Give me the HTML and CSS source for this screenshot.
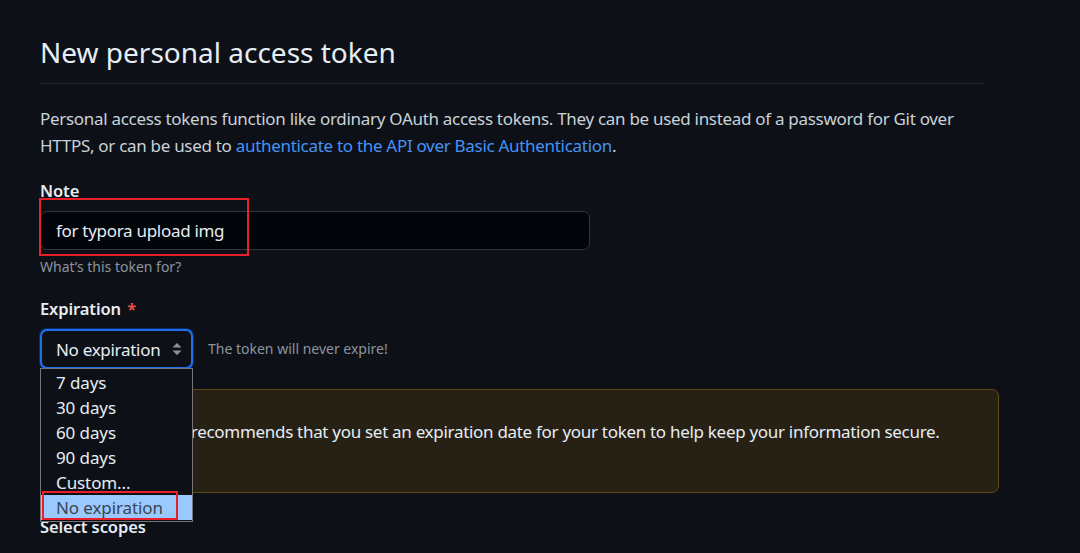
FILE: index.html
```html
<!DOCTYPE html>
<html lang="en">
<head>
<meta charset="utf-8">
<title>New personal access token</title>
<link rel="stylesheet" href="styles.css">
</head>
<body>
<main class="page">
  <div class="subhead">
    <h1 class="subhead-title">New personal access token</h1>
  </div>
  <p class="intro">Personal access tokens function like ordinary OAuth access tokens. They can be used instead of a password for Git over HTTPS, or can be used to <a href="#" class="link">authenticate to the API over Basic Authentication</a>.</p>

  <div class="form-group note-group">
    <label class="label">Note</label>
    <div class="input-wrap">
      <input class="text-input" type="text" value="for typora upload img">
      <span class="annot annot-note"></span>
    </div>
    <p class="note-hint">What’s this token for?</p>
  </div>

  <div class="form-group exp-group">
    <label class="label">Expiration <span class="req">*</span></label>
    <div class="exp-row">
      <div class="select-wrap">
        <div class="select">
          <span>No expiration</span>
          <svg class="select-arrow" width="10" height="14" viewBox="0 0 10 14"><path d="M5 1 L9.5 5.5 H0.5 Z M5 13 L9.5 8.5 H0.5 Z" fill="#8b949e"/></svg>
        </div>
        <ul class="dropdown">
          <li class="opt">7 days</li>
          <li class="opt">30 days</li>
          <li class="opt">60 days</li>
          <li class="opt">90 days</li>
          <li class="opt">Custom...</li>
          <li class="opt opt-selected">No expiration</li>
        </ul>
        <span class="annot annot-opt"></span>
      </div>
      <span class="exp-hint">The token will never expire!</span>
    </div>
  </div>

  <div class="flash-warn">
    <svg class="flash-icon" width="18" height="18" viewBox="0 0 16 16"><path fill="#d29922" d="M6.457 1.047c.659-1.234 2.427-1.234 3.086 0l6.082 11.378A1.75 1.75 0 0 1 14.082 15H1.918a1.750 1.75 0 0 1-1.543-2.575Zm1.763.707a.25.25 0 0 0-.44 0L1.698 13.132a.25.25 0 0 0 .22.368h12.164a.25.25 0 0 0 .22-.368Zm.53 3.996v2.5a.75.75 0 0 1-1.5 0v-2.5a.75.75 0 0 1 1.5 0ZM9 11a1 1 0 1 1-2 0 1 1 0 0 1 2 0Z"/></svg>
    <span>GitHub recommends that you set an expiration date for your token to help keep your information secure.</span>
  </div>

  <h3 class="scopes-title">Select scopes</h3>
</main>
</body>
</html>
```

FILE: styles.css
```css
* { box-sizing: border-box; }
html, body { margin: 0; padding: 0; }
body {
  background: #0d1117;
  color: #c9d1d9;
  font-family: "Noto Sans", "Open Sans", sans-serif;
  font-size: 17px;
  letter-spacing: -0.3px;
  line-height: 27px;
  overflow: hidden;
  height: 553px;
}
.page {
  padding: 0 0 0 40px;
  width: 1000px;
}
.subhead {
  width: 945px;
  border-bottom: 1px solid #21262d;
  padding-top: 34px;
  padding-bottom: 12px;
}
.subhead-title {
  margin: 0;
  font-weight: 400;
  font-size: 28px;
  letter-spacing: 0;
  line-height: 37px;
  color: #e6edf3;
}
.intro {
  margin: 21px 0 0 0;
  width: 945px;
  color: #c9d1d9;
}
.link { color: #4493f8; text-decoration: none; }
.label {
  display: block;
  font-weight: 600;
  color: #e6edf3;
  font-size: 16.5px;
  letter-spacing: -0.1px;
  line-height: 24px;
}
.note-group { margin-top: 20px; }
.input-wrap { position: relative; margin-top: 8px; width: 550px; }
.text-input {
  display: block;
  width: 550px;
  height: 39px;
  background: #010409;
  border: 1px solid #30363d;
  border-radius: 7px;
  color: #e6edf3;
  font-family: inherit;
  font-size: 17px;
  letter-spacing: -0.3px;
  padding: 0 15px;
  outline: none;
}
.note-hint {
  margin: 6px 0 0 0;
  font-size: 14px;
  letter-spacing: 0;
  line-height: 21px;
  color: #8b949e;
}
.exp-group { margin-top: 20px; }
.req { color: #f85149; margin-left: 2px; }
.exp-row {
  display: flex;
  align-items: center;
  gap: 15px;
  margin-top: 8px;
}
.select-wrap { position: relative; z-index: 5; }
.select {
  width: 153px;
  height: 40px;
  border: 2px solid #1f6feb;
  border-radius: 7px;
  box-shadow: 0 0 0 1px #0c2d6b;
  background: #0d1117;
  display: flex;
  align-items: center;
  justify-content: space-between;
  padding: 0 9px 0 14px;
  color: #e6edf3;
}
.select-arrow { display: block; }
.exp-hint {
  font-size: 14px;
  letter-spacing: 0;
  color: #8b949e;
  margin-top: -2px;
}
.dropdown {
  position: absolute;
  left: 0;
  top: 39px;
  width: 153px;
  margin: 0;
  padding: 1px 0;
  list-style: none;
  background: #0d1117;
  border: 1px solid #767676;
}
.opt {
  height: 25px;
  line-height: 25px;
  padding-left: 15px;
  color: #e6edf3;
  letter-spacing: -0.1px;
  white-space: nowrap;
}
.opt-selected {
  background: #99c9ff;
  color: #3c4450;
}
.annot {
  position: absolute;
  border: 2px solid #e8202a;
  pointer-events: none;
}
.annot-note { left: -1px; top: -13px; width: 210px; height: 58px; }
.annot-opt { left: 2px; top: 162px; width: 136px; height: 29px; z-index: 6; }
.flash-warn {
  margin-top: 20px;
  width: 959px;
  height: 104px;
  background: #272115;
  border: 1px solid #614a15;
  border-radius: 7px;
  display: flex;
  align-items: flex-start;
  gap: 10px;
  padding: 28px 16px 0 63px;
  color: #e6edf3;
}
.flash-icon { margin-top: 4px; }
.scopes-title {
  margin: 22px 0 0 0;
  font-size: 16.5px;
  letter-spacing: -0.1px;
  line-height: 24px;
  font-weight: 600;
  color: #e6edf3;
}
```
